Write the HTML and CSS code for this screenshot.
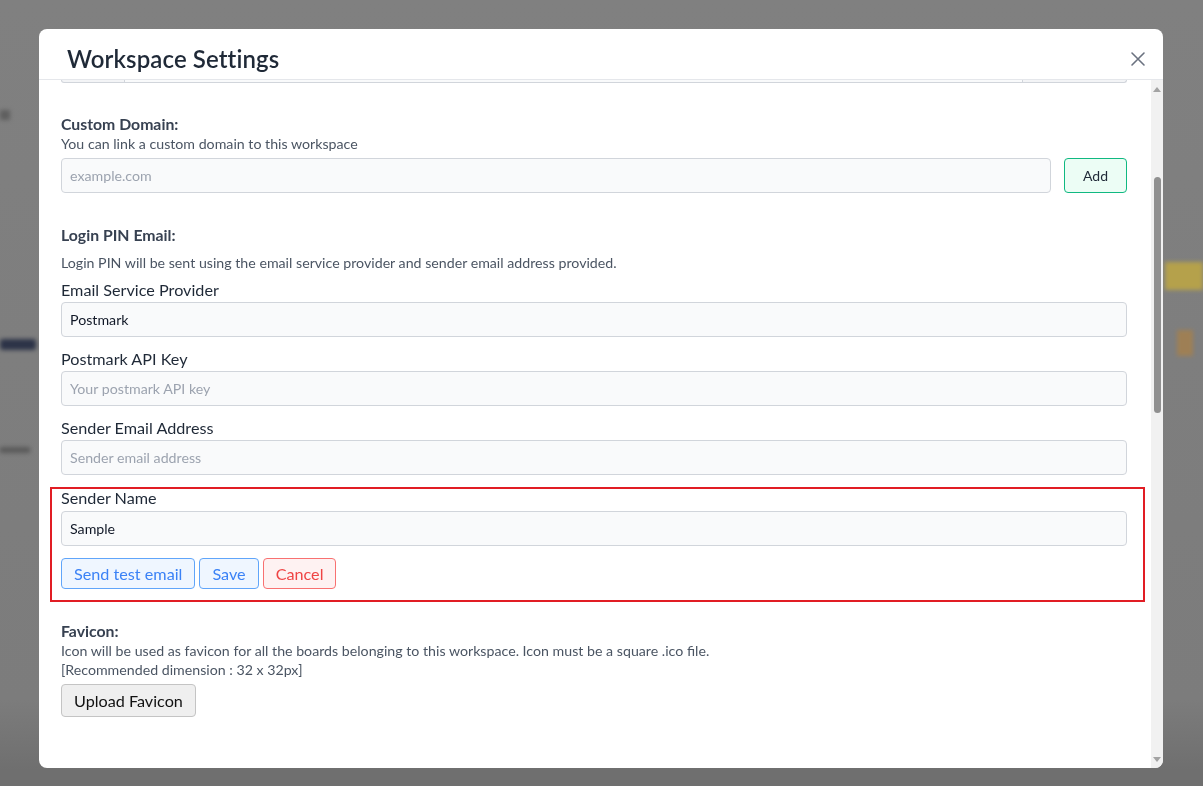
FILE: index.html
```html
<!DOCTYPE html>
<html lang="en">
<head>
    <meta charset="UTF-8">
    <meta name="viewport" content="width=device-width, initial-scale=1.0">
    <title>Workspace Settings</title>
    <link rel="stylesheet" href="styles.css">
</head>
<body>
    <!-- blurred page behind the overlay -->
    <div class="page">
        <div class="blob blob_navy"></div>
        <div class="blob blob_text1"></div>
        <div class="blob blob_text2"></div>
        <div class="blob blob_yellow"></div>
        <div class="blob blob_orange"></div>
    </div>

    <div class="modal">
        <div class="modal_head">
            <h2 class="modal_title">Workspace Settings</h2>
            <button class="close_btn" aria-label="Close">
                <svg width="16" height="16" viewBox="0 0 16 16"><path d="M2 2L14 14M14 2L2 14" stroke="#6b7280" stroke-width="1.6" stroke-linecap="round"/></svg>
            </button>
        </div>

        <div class="modal_main">
            <div class="modal_body">
                <div class="cut_group">
                    <span class="cut_addon cut_left"></span>
                    <span class="cut_input"></span>
                    <span class="cut_addon cut_right"></span>
                </div>

                <section class="block block_domain">
                    <h3 class="block_title">Custom Domain:</h3>
                    <p class="block_desc">You can link a custom domain to this workspace</p>
                    <div class="domain_row">
                        <input class="field" type="text" placeholder="example.com">
                        <button class="btn btn_add">Add</button>
                    </div>
                </section>

                <section class="block block_pin">
                    <h3 class="block_title">Login PIN Email:</h3>
                    <p class="block_desc pin_desc">Login PIN will be sent using the email service provider and sender email address provided.</p>

                    <label class="field_label first">Email Service Provider</label>
                    <input class="field" type="text" value="Postmark">

                    <label class="field_label">Postmark API Key</label>
                    <input class="field" type="text" placeholder="Your postmark API key">

                    <label class="field_label">Sender Email Address</label>
                    <input class="field" type="text" placeholder="Sender email address">

                    <div class="highlight">
                        <label class="field_label in_box">Sender Name</label>
                        <input class="field" type="text" value="Sample">
                        <div class="btn_row">
                            <button class="btn btn_blue">Send test email</button>
                            <button class="btn btn_blue">Save</button>
                            <button class="btn btn_red">Cancel</button>
                        </div>
                    </div>
                </section>

                <section class="block block_favicon">
                    <h3 class="block_title">Favicon:</h3>
                    <p class="block_desc fav_desc">Icon will be used as favicon for all the boards belonging to this workspace. Icon must be a square .ico file.<br>[Recommended dimension : 32 x 32px]</p>
                    <button class="btn btn_upload">Upload Favicon</button>
                </section>
            </div>

            <div class="scrollbar">
                <span class="arrow_up"></span>
                <span class="thumb"></span>
                <span class="arrow_down"></span>
            </div>
        </div>
    </div>
</body>
</html>
```

FILE: styles.css
```css
* { margin: 0; padding: 0; box-sizing: border-box; }
html, body { height: 100%; }
body {
    font-family: "Lato", "Noto Sans", sans-serif;
    background: #7c7c7c;
    overflow: hidden;
    color: #1f2937;
}

/* page behind overlay */
.page {
    height: 100%;
    position: relative;
    background: linear-gradient(#808080 0, #7c7c7c 700px, #6f6f6f 770px);
}
.blob { position: absolute; filter: blur(2px); }
.blob_navy { left: 0; top: 339px; width: 36px; height: 11px; background: #2d3448; border-radius: 3px; }
.blob_text1 { left: 0; top: 447px; width: 30px; height: 6px; background: #5a5a5a; }
.blob_text2 { left: 0; top: 110px; width: 10px; height: 10px; background: #5f5f5f; }
.blob_yellow { right: 0; top: 262px; width: 38px; height: 28px; background: #c8ad3a; opacity: .75; }
.blob_orange { right: 10px; top: 330px; width: 16px; height: 26px; background: #b4813a; opacity: .6; }

/* modal */
.modal {
    position: fixed;
    left: 39px;
    top: 29px;
    width: 1124px;
    height: 739px;
    background: #fff;
    border-radius: 8px;
    overflow: hidden;
    display: flex;
    flex-direction: column;
}
.modal_head {
    height: 51px;
    flex: none;
    display: flex;
    align-items: center;
    justify-content: space-between;
    padding: 8px 18px 0 28px;
    border-bottom: 1px solid #e5e7eb;
}
.modal_title {
    font-size: 24px;
    font-weight: 600;
    color: #1f2937;
    letter-spacing: 0.1px;
}
.close_btn {
    border: 0;
    background: none;
    width: 16px;
    height: 16px;
    display: flex;
    align-items: center;
    justify-content: center;
    margin: 2px -1px 0 0;
}

.modal_main {
    flex: 1;
    display: flex;
    min-height: 0;
}
.modal_body {
    flex: 1;
    padding: 0 24px 0 22px;
    overflow: hidden;
}

/* bottom of a group scrolled out of view */
.cut_group {
    display: flex;
    height: 3px;
}
.cut_group span {
    border: 1px solid #d1d5db;
    border-top: 0;
}
.cut_left { width: 64px; background: #f3f4f6; border-radius: 0 0 0 4px; }
.cut_input { flex: 1; background: #f9fafb; border-left: 0 !important; border-right: 0 !important; }
.cut_right { width: 105px; background: #f3f4f6; border-radius: 0 0 4px 0; }

.block_title {
    font-size: 15.8px;
    font-weight: 700;
    color: #374151;
    line-height: 20px;
}
.block_desc {
    font-size: 14.2px;
    color: #4b5563;
    line-height: 18px;
}
.block_domain { padding-top: 31px; }
.block_domain .block_desc { margin-top: 1px; }
.domain_row {
    display: flex;
    gap: 13px;
    margin-top: 5px;
}

.field {
    display: block;
    width: 100%;
    height: 35px;
    border: 1px solid #d1d5db;
    border-radius: 4px;
    background: #f9fafb;
    padding: 0 8px;
    font-family: inherit;
    font-size: 14.2px;
    color: #111827;
    outline: none;
}
.field::placeholder { color: #9ca3af; }

.btn {
    font-family: inherit;
    border-radius: 4px;
    cursor: pointer;
}
.btn_add {
    flex: none;
    width: 63px;
    height: 35px;
    background: #ecfdf5;
    border: 1px solid #10b981;
    font-size: 14px;
    color: #1f2937;
}

.block_pin { padding-top: 32px; }
.pin_desc { margin-top: 9px; }

.field_label {
    display: block;
    font-size: 16.2px;
    line-height: 20px;
    color: #1f2937;
    margin: 12px 0 2px;
}
.field_label.first { margin-top: 8px; }

.highlight {
    margin: 12px -18px 0 -11px;
    padding: 0 16px 11px 9px;
    border: 2px solid #e11d24;
}
.field_label.in_box { margin-top: -1px; margin-bottom: 3px; }
.btn_row {
    display: flex;
    gap: 4px;
    margin-top: 12px;
}
.btn_blue, .btn_red {
    height: 31px;
    padding: 0 12px;
    font-size: 16.2px;
}
.btn_blue {
    background: #eff6ff;
    border: 1px solid #60a5fa;
    color: #3b82f6;
}
.btn_red {
    background: #fef2f2;
    border: 1px solid #f87171;
    color: #ef4444;
}

.block_favicon { padding-top: 19px; }
.fav_desc { line-height: 19px; }
.btn_upload {
    margin-top: 5px;
    height: 33px;
    padding: 0 12px;
    font-size: 16.2px;
    color: #111;
    background: #efefef;
    border: 1px solid #c4c4c4;
}

/* fake scrollbar column */
.scrollbar {
    flex: none;
    width: 12px;
    background: #f1f1f1;
    display: flex;
    flex-direction: column;
    align-items: center;
}
.arrow_up, .arrow_down {
    width: 0;
    height: 0;
    border-left: 4px solid transparent;
    border-right: 4px solid transparent;
}
.arrow_up { border-bottom: 5px solid #a3a3a3; margin-top: 7px; }
.arrow_down { border-top: 5px solid #a3a3a3; margin-top: auto; margin-bottom: 6px; }
.thumb {
    width: 7px;
    height: 236px;
    margin-top: 85px;
    background: #909090;
    border-radius: 4px;
}
```
